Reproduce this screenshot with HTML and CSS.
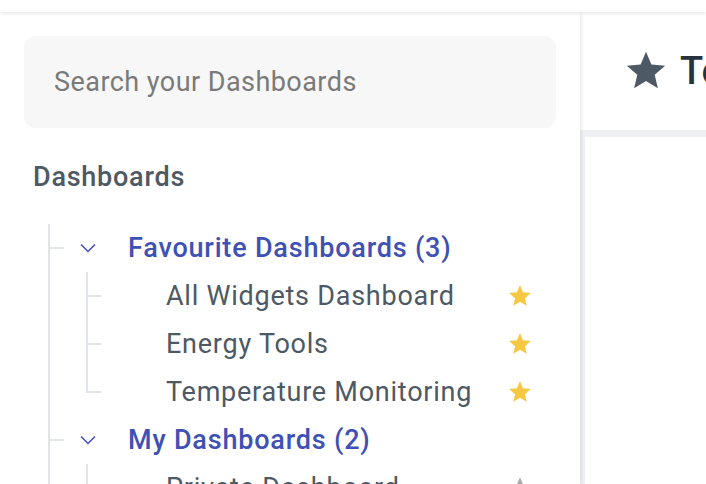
FILE: index.html
```html
<!DOCTYPE html>
<html lang="en">
<head>
    <meta charset="UTF-8">
    <meta name="viewport" content="width=device-width, initial-scale=1.0">
    <title>Dashboards</title>
    <link rel="stylesheet" href="styles.css">
</head>
<body>
<div class="topbar"></div>
<div class="layout">
    <aside class="sidebar">
        <div class="search">
            <input type="text" placeholder="Search your Dashboards">
        </div>
        <h2 class="section-title">Dashboards</h2>
        <ul class="tree">
            <li class="group">
                <div class="group-row">
                    <span class="stub"></span>
                    <svg class="chevron" viewBox="0 0 16 10" width="16" height="10"><path d="M1 1.5 L8 8.5 L15 1.5" fill="none" stroke="#3f51b5" stroke-width="1.5"/></svg>
                    <span class="group-name">Favourite Dashboards (3)</span>
                </div>
                <ul class="children">
                    <li class="child">
                        <span class="branch"></span>
                        <span class="child-name">All Widgets Dashboard</span>
                        <svg class="star fav" viewBox="0 0 24 24" width="26" height="26"><path d="M12 17.27L18.18 21l-1.64-7.03L22 9.24l-7.19-.61L12 2 9.19 8.63 2 9.24l5.46 4.73L5.82 21z"/></svg>
                    </li>
                    <li class="child">
                        <span class="branch"></span>
                        <span class="child-name">Energy Tools</span>
                        <svg class="star fav" viewBox="0 0 24 24" width="26" height="26"><path d="M12 17.27L18.18 21l-1.64-7.03L22 9.24l-7.19-.61L12 2 9.19 8.63 2 9.24l5.46 4.73L5.82 21z"/></svg>
                    </li>
                    <li class="child">
                        <span class="branch"></span>
                        <span class="child-name">Temperature Monitoring</span>
                        <svg class="star fav" viewBox="0 0 24 24" width="26" height="26"><path d="M12 17.27L18.18 21l-1.64-7.03L22 9.24l-7.19-.61L12 2 9.19 8.63 2 9.24l5.46 4.73L5.82 21z"/></svg>
                    </li>
                </ul>
            </li>
            <li class="group">
                <div class="group-row">
                    <span class="stub"></span>
                    <svg class="chevron" viewBox="0 0 16 10" width="16" height="10"><path d="M1 1.5 L8 8.5 L15 1.5" fill="none" stroke="#3f51b5" stroke-width="1.5"/></svg>
                    <span class="group-name">My Dashboards (2)</span>
                </div>
                <ul class="children">
                    <li class="child">
                        <span class="branch"></span>
                        <span class="child-name">Private Dashboard</span>
                        <svg class="star" viewBox="0 0 24 24" width="26" height="26"><path d="M12 17.27L18.18 21l-1.64-7.03L22 9.24l-7.19-.61L12 2 9.19 8.63 2 9.24l5.46 4.73L5.82 21z"/></svg>
                    </li>
                    <li class="child">
                        <span class="branch"></span>
                        <span class="child-name">Shared Dashboard</span>
                        <svg class="star" viewBox="0 0 24 24" width="26" height="26"><path d="M12 17.27L18.18 21l-1.64-7.03L22 9.24l-7.19-.61L12 2 9.19 8.63 2 9.24l5.46 4.73L5.82 21z"/></svg>
                    </li>
                </ul>
            </li>
        </ul>
    </aside>
    <main class="content">
        <header class="content-header">
            <svg class="title-star" viewBox="0 0 24 24" width="46" height="46"><path d="M12 17.27L18.18 21l-1.64-7.03L22 9.24l-7.19-.61L12 2 9.19 8.63 2 9.24l5.46 4.73L5.82 21z"/></svg>
            <h1 class="content-title">Temperature Monitoring</h1>
        </header>
        <section class="content-body"></section>
    </main>
</div>
</body>
</html>
```

FILE: styles.css
```css
body {
    margin: 0;
    background-color: #fff;
    font-family: Roboto, 'Noto Sans', sans-serif;
    color: #4d5964;
    overflow: hidden;
}
.topbar {
    height: 12px;
    background-color: #fff;
    box-shadow: 0 1px 4px rgba(0, 0, 0, 0.12);
    position: relative;
    z-index: 2;
}
.layout {
    display: flex;
    height: 472px;
}
.sidebar {
    width: 532px;
    flex-shrink: 0;
    padding: 24px 24px 0 24px;
    background-color: #fff;
    box-shadow: 1px 0 4px rgba(0, 0, 0, 0.1);
    position: relative;
    z-index: 1;
}
.search {
    height: 92px;
    background-color: #f7f7f7;
    border-radius: 12px;
    display: flex;
    align-items: center;
    padding: 0 30px;
}
.search input {
    width: 100%;
    border: none;
    outline: none;
    background: transparent;
    font-family: inherit;
    font-size: 27px;
    letter-spacing: 0.45px;
    color: #333;
    padding: 0;
}
.search input::placeholder {
    color: #7a7a7a;
}
.section-title {
    margin: 33px 0 0 9px;
    font-size: 27px;
    font-weight: 500;
    letter-spacing: 0.75px;
    line-height: 32px;
    color: #4d5964;
}
.tree {
    list-style: none;
    margin: 31px 0 0 24px;
    padding: 0;
    border-left: 2px solid #e1e5ea;
}
.group-row {
    height: 48px;
    display: flex;
    align-items: center;
}
.stub {
    width: 14px;
    height: 2px;
    background-color: #e1e5ea;
}
.chevron {
    margin-left: 16px;
}
.group-name {
    margin-left: 32px;
    font-size: 27px;
    font-weight: 500;
    letter-spacing: 0.8px;
    color: #3f51b5;
    white-space: nowrap;
}
.children {
    list-style: none;
    margin: 0 0 0 36px;
    padding: 0;
}
.child {
    height: 48px;
    display: flex;
    align-items: center;
    padding-right: 23px;
}
.branch {
    width: 15px;
    align-self: stretch;
    background:
        linear-gradient(#e1e5ea, #e1e5ea) left top / 2px 100% no-repeat,
        linear-gradient(#e1e5ea, #e1e5ea) left center / 15px 2px no-repeat;
}
.child:last-child .branch {
    background:
        linear-gradient(#e1e5ea, #e1e5ea) left top / 2px calc(50% + 1px) no-repeat,
        linear-gradient(#e1e5ea, #e1e5ea) left center / 15px 2px no-repeat;
}
.child-name {
    flex: 1;
    margin-left: 65px;
    font-size: 27px;
    letter-spacing: 0.76px;
    color: #4d5964;
    white-space: nowrap;
}
.star {
    fill: #a9a9a9;
    flex-shrink: 0;
}
.star.fav {
    fill: #f7c844;
}
.content {
    flex: 1;
    background-color: #eef0f3;
    display: flex;
    flex-direction: column;
    min-width: 0;
}
.content-header {
    height: 118px;
    background-color: #fff;
    display: flex;
    align-items: center;
    padding-left: 43px;
    white-space: nowrap;
}
.title-star {
    fill: #4d5964;
    flex-shrink: 0;
}
.content-title {
    margin: 0 0 0 11px;
    font-size: 38px;
    font-weight: 500;
    color: #27323c;
}
.content-body {
    flex: 1;
    margin: 7px 0 0 5px;
    background-color: #fff;
}
```
